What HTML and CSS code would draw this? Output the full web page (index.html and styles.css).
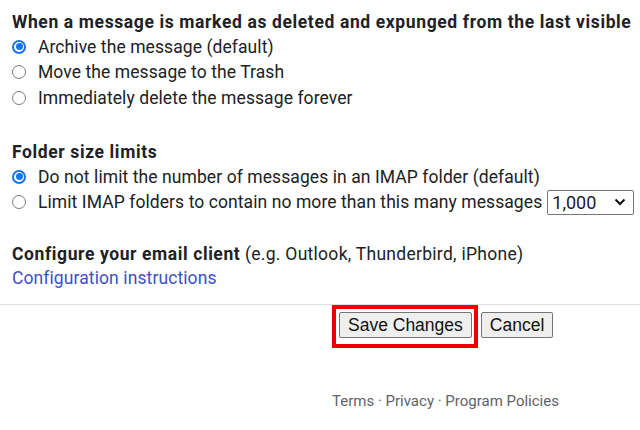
FILE: index.html
```html
<!DOCTYPE html>
<html>
<head>
<meta charset="utf-8">
<link rel="stylesheet" href="styles.css">
</head>
<body>
<div class="page">
  <section class="group">
    <h2 class="title">When a message is marked as deleted and expunged from the last visible</h2>
    <label class="opt"><span class="radio on"></span>Archive the message (default)</label>
    <label class="opt"><span class="radio"></span>Move the message to the Trash</label>
    <label class="opt"><span class="radio"></span>Immediately delete the message forever</label>
  </section>
  <section class="group folder">
    <h2 class="title">Folder size limits</h2>
    <label class="opt"><span class="radio on"></span>Do not limit the number of messages in an IMAP folder (default)</label>
    <label class="opt"><span class="radio"></span>Limit IMAP folders to contain no more than this many messages
      <span class="select">1,000<svg class="chev" viewBox="0 0 12 8" width="12" height="8"><path d="M1.5 1.5 L6 6 L10.5 1.5" fill="none" stroke="#111" stroke-width="2"/></svg></span></label>
  </section>
  <section class="client">
    <p class="line"><b>Configure your email client</b> (e.g. Outlook, Thunderbird, iPhone)</p>
    <a class="link" href="#">Configuration instructions</a>
  </section>
</div>
<div class="actions">
  <div class="highlight"><button class="btn">Save Changes</button></div>
  <button class="btn">Cancel</button>
</div>
<footer class="footer">Terms · Privacy · Program Policies</footer>
</body>
</html>
```
FILE: styles.css
```css
html, body { margin: 0; padding: 0; background: #fff; }
body { font-family: Roboto, "Noto Sans", sans-serif; color: #202124; font-size: 17.5px; width: 640px; overflow: hidden; }
.page { padding: 10px 0 0 12px; display: flex; flex-direction: column; }
.group { display: flex; flex-direction: column; }
.folder { margin-top: 29.5px; }
.title { margin: 0; font-size: 17.5px; font-weight: 700; line-height: 24px; white-space: nowrap; letter-spacing: 0.62px; }
.opt { display: flex; align-items: center; height: 25.5px; white-space: nowrap; letter-spacing: 0.08px; }
.radio { width: 12px; height: 12px; border: 1px solid #7a7a7a; border-radius: 50%; margin-right: 12px; box-sizing: content-box; flex: none; }
.radio.on { border: 2px solid #1a73e8; width: 10px; height: 10px; position: relative; }
.radio.on::after { content: ""; position: absolute; left: 1.5px; top: 1.5px; width: 7px; height: 7px; background: #1a73e8; border-radius: 50%; }
.select { display: inline-flex; align-items: center; justify-content: space-between; margin-left: 5px; width: 87px; height: 25px; box-sizing: border-box; border: 1px solid #767676; border-radius: 2px; padding: 0 7px 0 4px; font-size: 18px; letter-spacing: 0; }
.chev { display: block; }
.client { margin-top: 26.5px; }
.line { margin: 0; line-height: 24px; letter-spacing: 0.28px; }
.line b { font-weight: 700; letter-spacing: 0.6px; }
.link { display: block; color: #3c50c8; text-decoration: none; line-height: 24px; letter-spacing: 0.1px; }
.actions { border-top: 1px solid #e0e0e0; margin-top: 14px; display: flex; align-items: flex-start; padding-left: 332px; }
.highlight { border: 4px solid #ee0000; padding: 3px 2px 6px 3px; }
.btn { display: block; font-family: "Liberation Sans", Arial, sans-serif; font-size: 17.5px; color: #111; background: #efefef; border: 1px solid #767676; border-radius: 2px; height: 26px; padding: 0 8px; line-height: 24px; }
.actions > .btn { margin-left: 3px; margin-top: 7px; }
.footer { padding: 44px 0 0 332px; font-family: Roboto, sans-serif; font-size: 15px; line-height: 18px; color: #5f6368; }
```
